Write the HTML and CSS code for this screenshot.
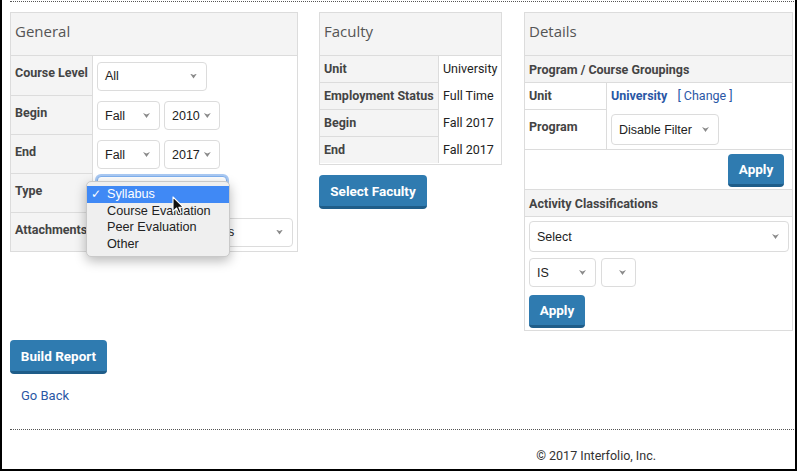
FILE: index.html
```html
<!DOCTYPE html>
<html lang="en">
<head>
  <meta charset="UTF-8" />
  <title>Report Builder | Interfolio</title>
  <link rel="stylesheet" href="styles.css">
</head>
<body>
  <div class="frame">
    <div class="rule"></div>

    <div class="columns">
      <!-- General filters -->
      <section class="panel general">
        <h2 class="panel-title">General</h2>
        <div class="form-grid">
          <div class="form-label">Course Level</div>
          <div class="form-value"><span class="select sel-level">All</span></div>

          <div class="form-label">Begin</div>
          <div class="form-value">
            <span class="select sel-term">Fall</span>
            <span class="select sel-year">2010</span>
          </div>

          <div class="form-label">End</div>
          <div class="form-value">
            <span class="select sel-term">Fall</span>
            <span class="select sel-year">2017</span>
          </div>

          <div class="form-label">Type</div>
          <div class="form-value type-cell">
            <span class="select sel-type focused"></span>
            <ul class="menu">
              <li class="active"><span class="check">✓</span>Syllabus</li>
              <li>Course Evaluation</li>
              <li>Peer Evaluation</li>
              <li>Other</li>
            </ul>
            <svg class="cursor" width="12" height="19" viewBox="0 0 12 19">
              <path d="M1 1 L1 15.5 L4.6 12 L7 17.6 L9.2 16.6 L6.9 11.2 L11.3 11.2 Z" fill="#111" stroke="#fff" stroke-width="1.1" stroke-linejoin="round"/>
            </svg>
          </div>

          <div class="form-label last">Attachments</div>
          <div class="form-value"><span class="select sel-attach">Include All Attachments</span></div>
        </div>
      </section>

      <!-- Faculty -->
      <section class="faculty-col">
        <div class="panel faculty">
          <h2 class="panel-title">Faculty</h2>
          <div class="info-grid">
            <div class="info-label">Unit</div>
            <div class="info-value">University</div>
            <div class="info-label">Employment Status</div>
            <div class="info-value">Full Time</div>
            <div class="info-label">Begin</div>
            <div class="info-value">Fall 2017</div>
            <div class="info-label last">End</div>
            <div class="info-value">Fall 2017</div>
          </div>
        </div>
        <button class="btn btn-faculty">Select Faculty</button>
      </section>

      <!-- Details -->
      <section class="panel details">
        <h2 class="panel-title">Details</h2>
        <div class="subhead">Program / Course Groupings</div>
        <div class="detail-grid">
          <div class="detail-label unit-label">Unit</div>
          <div class="detail-value unit-value">
            <a href="#" class="unit-link">University</a>
            <a href="#" class="change-link">[ Change ]</a>
          </div>
          <div class="detail-label program-label">Program</div>
          <div class="detail-value"><span class="select sel-program">Disable Filter</span></div>
        </div>
        <div class="apply-row">
          <button class="btn btn-apply">Apply</button>
        </div>

        <div class="subhead second">Activity Classifications</div>
        <div class="activity">
          <span class="select sel-full">Select</span>
          <div class="activity-pair">
            <span class="select sel-is">IS</span>
            <span class="select sel-blank"></span>
          </div>
          <button class="btn btn-apply">Apply</button>
        </div>
      </section>
    </div>

    <button class="btn btn-build">Build Report</button>
    <a href="#" class="go-back">Go Back</a>

    <div class="rule bottom"></div>

    <footer>&copy; 2017 Interfolio, Inc.</footer>
  </div>
</body>
</html>
```

FILE: styles.css
```css
:root {
  --line: #dcdcdc;
  --shade: #f4f4f4;
  --blue: #2f7bb0;
  --blue-dark: #1f5d89;
  --link: #2a57a5;
}

* {
  margin: 0;
  padding: 0;
  box-sizing: border-box;
}

body {
  background-color: #fff;
  color: #333;
  font-family: Roboto, "Liberation Sans", sans-serif;
  font-size: 12.5px;
}

.frame {
  width: 797px;
  height: 471px;
  padding-left: 8px;
  padding-right: 1px;
  border-left: 2px solid #000;
  border-right: 2px solid #000;
  border-bottom: 2px solid #000;
  display: flex;
  flex-direction: column;
  align-items: flex-start;
}

.rule {
  width: 100%;
  margin-top: 1px;
  border-top: 1px dotted #555;
}

.rule.bottom {
  margin-top: 25px;
}

.columns {
  display: flex;
  align-items: flex-start;
  margin-top: 10px;
}

/* panels */

.panel {
  border: 1px solid var(--line);
  background-color: #fff;
}

.panel-title {
  height: 43px;
  padding: 8px 0 0 4px;
  background-color: var(--shade);
  border-bottom: 1px solid var(--line);
  font-family: "Open Sans", Lato, sans-serif;
  font-weight: 400;
  font-size: 15px;
  color: #555;
}

.general {
  width: 288px;
}

.form-grid {
  display: grid;
  grid-template-columns: 82px 1fr;
  grid-template-rows: 40px 39px 39px 39px 38px;
}

.form-label {
  padding: 9px 0 0 4px;
  background-color: var(--shade);
  border-right: 1px solid var(--line);
  border-bottom: 1px solid var(--line);
  font-weight: 700;
  color: #444;
  white-space: nowrap;
}

.form-label.last {
  border-bottom: none;
}

.form-value {
  display: flex;
  align-items: center;
  gap: 4px;
  padding-left: 4px;
}

.type-cell {
  position: relative;
  align-items: flex-start;
  padding-top: 2px;
}

/* fake native selects */

.select {
  display: inline-flex;
  align-items: center;
  justify-content: space-between;
  height: 29px;
  padding: 0 9px 0 7px;
  border: 1px solid var(--line);
  border-radius: 4px;
  background-color: #fff;
  font-family: "Liberation Sans", Arial, sans-serif;
  font-size: 12.5px;
  color: #222;
  white-space: nowrap;
  overflow: hidden;
}

.select::after {
  content: "";
  flex: none;
  width: 7px;
  height: 5px;
  margin-left: 4px;
  background-color: #8a8a8a;
  clip-path: polygon(0 0, 50% 30%, 100% 0, 50% 100%);
}

.sel-level { width: 110px; }
.sel-term { width: 63px; }
.sel-year { width: 56px; }
.sel-type { width: 130px; }
.sel-attach { width: 196px; }
.sel-program { width: 108px; height: 31px; }
.sel-full { width: 260px; height: 31px; }
.sel-is { width: 67px; }
.sel-blank { width: 35px; justify-content: flex-end; }

.select.focused {
  border-color: #7fb0ee;
  box-shadow: 0 0 0 2px #a9c9f3;
}

/* open dropdown */

.menu {
  position: absolute;
  left: -7px;
  top: 7px;
  width: 144px;
  padding-top: 4px;
  height: 76px;
  list-style: none;
  background-color: #efefef;
  border: 1px solid #c9c9c9;
  border-radius: 5px;
  box-shadow: 0 4px 12px rgba(0, 0, 0, 0.28);
  font-family: "Liberation Sans", Arial, sans-serif;
  font-size: 12.7px;
  color: #222;
  z-index: 5;
}

.menu li {
  position: relative;
  height: 16.7px;
  line-height: 16px;
  padding-left: 20px;
}

.menu li.active {
  background-color: #4089f5;
  color: #fff;
}

.check {
  position: absolute;
  left: 4px;
  top: 0;
  font-size: 12px;
  font-weight: 700;
  font-family: "DejaVu Sans", sans-serif;
}

.cursor {
  position: absolute;
  left: 79px;
  top: 22px;
  z-index: 6;
}

/* faculty */

.faculty-col {
  display: flex;
  flex-direction: column;
  align-items: flex-start;
  margin-left: 21px;
}

.faculty {
  width: 183px;
}

.info-grid {
  display: grid;
  grid-template-columns: 119px 1fr;
  grid-auto-rows: 27px;
}

.info-label {
  padding: 5px 0 0 4px;
  background-color: var(--shade);
  border-right: 1px solid var(--line);
  border-bottom: 1px solid var(--line);
  font-weight: 700;
  color: #444;
  white-space: nowrap;
}

.info-label.last {
  border-bottom: none;
  height: 26px;
}

.info-value {
  padding: 5px 0 0 4px;
  color: #222;
  white-space: nowrap;
}

/* buttons */

.btn {
  height: 34px;
  padding: 0 11px;
  border: none;
  border-bottom: 3px solid var(--blue-dark);
  border-radius: 4px;
  background-color: var(--blue);
  color: #fff;
  font-family: Roboto, "Liberation Sans", sans-serif;
  font-weight: 700;
  font-size: 13.5px;
  cursor: pointer;
}

.btn-faculty {
  width: 108px;
  margin-top: 10px;
  padding: 0;
}

.btn-apply {
  width: 56px;
  height: 33px;
  padding: 0;
}

.btn-build {
  width: 97px;
  margin-top: 9px;
  padding: 0;
}

/* details */

.details {
  width: 269px;
  margin-left: 22px;
}

.subhead {
  height: 27px;
  padding: 6px 0 0 4px;
  background-color: var(--shade);
  border-bottom: 1px solid var(--line);
  font-weight: 700;
  color: #444;
}

.subhead.second {
  height: 28px;
  border-top: 1px solid var(--line);
}

.detail-grid {
  display: grid;
  grid-template-columns: 82px 1fr;
  grid-template-rows: 27px 39px;
  border-bottom: 1px solid var(--line);
}

.detail-label {
  padding: 5px 0 0 4px;
  border-right: 1px solid var(--line);
  font-weight: 700;
  color: #444;
}

.unit-label {
  border-bottom: 1px solid var(--line);
}

.program-label {
  padding-top: 9px;
}

.detail-value {
  display: flex;
  align-items: center;
  gap: 10px;
  padding-left: 4px;
}

.unit-value {
  align-items: flex-start;
  padding-top: 5px;
}

.unit-link {
  color: var(--link);
  font-weight: 700;
  text-decoration: none;
}

.change-link {
  color: var(--link);
  text-decoration: none;
}

.apply-row {
  display: flex;
  justify-content: flex-end;
  height: 39px;
  padding: 4px 8px 0 0;
}

.activity {
  display: flex;
  flex-direction: column;
  align-items: flex-start;
  padding: 4px 4px 2px 4px;
}

.activity-pair {
  display: flex;
  gap: 5px;
  margin: 6px 0 8px;
}

/* bottom */

.go-back {
  margin: 14px 0 0 11px;
  line-height: 16px;
  font-size: 13px;
  color: var(--link);
  text-decoration: none;
}

footer {
  align-self: flex-end;
  margin: 19px 138px 0 0;
  line-height: 14px;
  font-size: 12.5px;
  color: #333;
}
```
